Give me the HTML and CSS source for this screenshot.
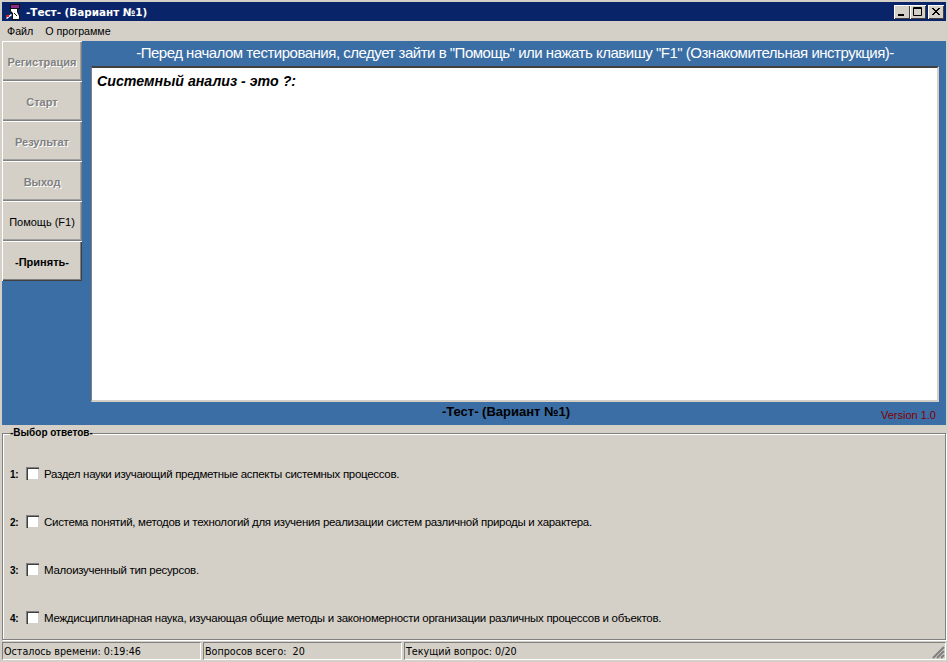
FILE: index.html
```html
<!DOCTYPE html>
<html lang="ru">
<head>
<meta charset="utf-8">
<title>-Тест- (Вариант №1)</title>
<link rel="stylesheet" href="styles.css">
</head>
<body>
<div class="window">
  <header class="titlebar">
    <svg class="app-icon" width="16" height="16" viewBox="0 0 16 16">
      <path d="M6 0h10v5H6z" fill="#111"/>
      <path d="M7 1h8v3H7z" fill="#8a2a88"/>
      <path d="M6 5h8v3l2 4v4H8V10L6 8z" fill="#111"/>
      <path d="M7 5h6v3l2 4v3H9V9L7 7z" fill="#fff"/>
      <path d="M2 14l5-4 1 1-5 4z" fill="#fff"/>
      <path d="M2 11h3v2H2z" fill="#d02020"/>
      <path d="M10 9l3 3" stroke="#111" fill="none"/>
    </svg>
    <span class="title-text">-Тест- (Вариант №1)</span>
    <div class="caption-buttons">
      <span class="cap-btn"><svg width="16" height="14" viewBox="0 0 16 14"><rect x="4" y="9" width="6" height="2" fill="#000"/></svg></span>
      <span class="cap-btn"><svg width="16" height="14" viewBox="0 0 16 14"><path d="M3.5 2.5h8v8h-8zM3 3.5h9" fill="none" stroke="#000"/></svg></span>
      <span class="cap-btn cap-close"><svg width="16" height="14" viewBox="0 0 16 14"><path d="M4 3l7 7M5 3l7 7M11 3l-7 7M12 3l-7 7" stroke="#000" fill="none"/></svg></span>
    </div>
  </header>
  <nav class="menubar"><span class="menu-item">Файл</span><span class="menu-item">О программе</span></nav>
  <section class="main">
    <div class="toolbar">
      <div class="tool-btn disabled">Регистрация</div>
      <div class="tool-btn disabled">Старт</div>
      <div class="tool-btn disabled">Результат</div>
      <div class="tool-btn disabled">Выход</div>
      <div class="tool-btn normal">Помощь (F1)</div>
      <div class="tool-btn strong">-Принять-</div>
    </div>
    <div class="content">
      <div class="hint">-Перед началом тестирования, следует зайти в "Помощь" или нажать клавишу "F1" (Ознакомительная инструкция)-</div>
      <div class="memo">Системный анализ - это ?:</div>
      <div class="caption-row">
        <span class="variant">-Тест- (Вариант №1)</span>
        <span class="version">Version 1.0</span>
      </div>
    </div>
  </section>
  <fieldset class="answers">
    <legend>-Выбор ответов-</legend>
    <div class="answer"><span class="num">1:</span><span class="check"></span><span>Раздел науки изучающий предметные аспекты системных процессов.</span></div>
    <div class="answer"><span class="num">2:</span><span class="check"></span><span>Система понятий, методов и технологий для изучения реализации систем различной природы и характера.</span></div>
    <div class="answer"><span class="num">3:</span><span class="check"></span><span>Малоизученный тип ресурсов.</span></div>
    <div class="answer"><span class="num">4:</span><span class="check"></span><span>Междисциплинарная наука, изучающая общие методы и закономерности организации различных процессов и объектов.</span></div>
  </fieldset>
  <footer class="statusbar">
    <div class="panel p1">Осталось времени: 0:19:46</div>
    <div class="panel p2">Вопросов всего:&nbsp; 20</div>
    <div class="panel p3">Текущий вопрос: 0/20
      <svg class="grip" width="14" height="14" viewBox="0 0 14 14"><path d="M13 2L2 13M13 6L6 13M13 10l-3 3" stroke="#808080" stroke-width="2" fill="none"/></svg>
    </div>
  </footer>
</div>
</body>
</html>
```
FILE: styles.css
```css
* { box-sizing: border-box; }
html, body { margin: 0; padding: 0; height: 100%; overflow: hidden; }
body { background: #d4d0c8; font-family: "Liberation Sans", Arial, sans-serif; font-size: 12px; color: #000; }
.window {
  width: 948px; height: 662px; display: flex; flex-direction: column;
  background: #d4d0c8; padding: 2px 2px 0 2px;
}
.titlebar {
  height: 19px; flex: none; display: flex; align-items: center;
  background: #0a246a; color: #fff; padding: 0 2px 0 2px;
}
.app-icon { flex: none; margin-right: 6px; }
.title-text { font-family: "DejaVu Sans", sans-serif; font-weight: 700; font-size: 10.4px; }
.caption-buttons { margin-left: auto; display: flex; }
.cap-btn {
  width: 16px; height: 14px; background: #d4d0c8; display: block;
  box-shadow: inset 1px 1px 0 #fff, inset -1px -1px 0 #404040;
}
.cap-btn svg { display: block; }
.cap-close { margin-left: 2px; }
.menubar { height: 20px; flex: none; display: flex; align-items: center; padding-left: 5px; font-size: 10.7px; gap: 12px; padding-bottom: 1px; }
.main { height: 384px; flex: none; display: flex; background: #3b6ea5; }
.toolbar { width: 80px; flex: none; display: flex; flex-direction: column; }
.tool-btn {
  height: 40px; flex: none; display: flex; align-items: center; justify-content: center;
  background: #d4d0c8; font-size: 11px; padding-top: 1px;
  box-shadow: inset 1px 1px 0 #fff, inset -1px -1px 0 #808080, inset -2px -2px 0 #a0a0a0;
}
.tool-btn.disabled { font-weight: 700; color: #808080; text-shadow: 1px 1px 0 #fff; }
.tool-btn.strong { font-weight: 700; box-shadow: inset 1px 1px 0 #fff, inset -1px -1px 0 #404040, inset -2px -2px 0 #808080; }
.content { flex: 1; min-width: 0; display: flex; flex-direction: column; padding: 0 7px 0 9px; }
.hint { height: 25px; flex: none; color: #fff; font-size: 15px; letter-spacing: -0.49px; text-align: center; line-height: 24px; white-space: nowrap; }
.memo {
  height: 336px; flex: none; background: #fff; padding: 3px 5px;
  font-size: 14.2px; font-weight: 700; font-style: italic; line-height: 20px;
  border-top: 2px solid #404040; border-left: 1px solid #808080;
  border-right: 2px solid #d4d0c8; border-bottom: 2px solid #d4d0c8;
}
.caption-row { flex: 1; display: flex; position: relative; align-items: flex-start; justify-content: center; }
.variant { font-size: 13px; font-weight: 700; line-height: 20px; margin-right: 18px; }
.version { position: absolute; right: 3px; top: 6px; color: #800000; font-size: 11px; line-height: 15px; }
.answers {
  flex: none; height: 214px; margin: 1px 0 0; padding: 0 0 0 7px;
  display: flex; flex-direction: column;
  border: 1px solid #808080;
  box-shadow: inset 1px 1px 0 #fff, 1px 1px 0 #fff;
}
.answers legend { font-weight: 700; font-size: 10px; padding: 0; background: #d4d0c8; line-height: 14px; }
.answer { height: 48px; flex: none; display: flex; align-items: center; position: relative; top: 10px; font-size: 11.5px; letter-spacing: -0.3px; }
.num { width: 16px; font-weight: 700; font-size: 10px; flex: none; }
.check {
  width: 13px; height: 13px; flex: none; background: #fff; margin-right: 5px; position: relative; top: -1px;
  border-top: 1px solid #808080; border-left: 1px solid #808080;
  box-shadow: inset 1px 1px 0 #404040, inset -1px -1px 0 #d4d0c8;
}
.statusbar { height: 20px; flex: none; display: flex; gap: 2px; padding-top: 2px; }
.panel {
  height: 18px; padding: 1px 1px; font-family: "DejaVu Sans", sans-serif; font-size: 9.6px; line-height: 15px; white-space: nowrap;
  border-top: 1px solid #808080; border-left: 1px solid #808080; border-right: 1px solid #fff; border-bottom: 1px solid #fff;
}
.p1 { width: 199px; flex: none; }
.p2 { width: 199px; flex: none; }
.p3 { flex: 1; position: relative; }
.grip { position: absolute; right: 0; bottom: 0; }
```
